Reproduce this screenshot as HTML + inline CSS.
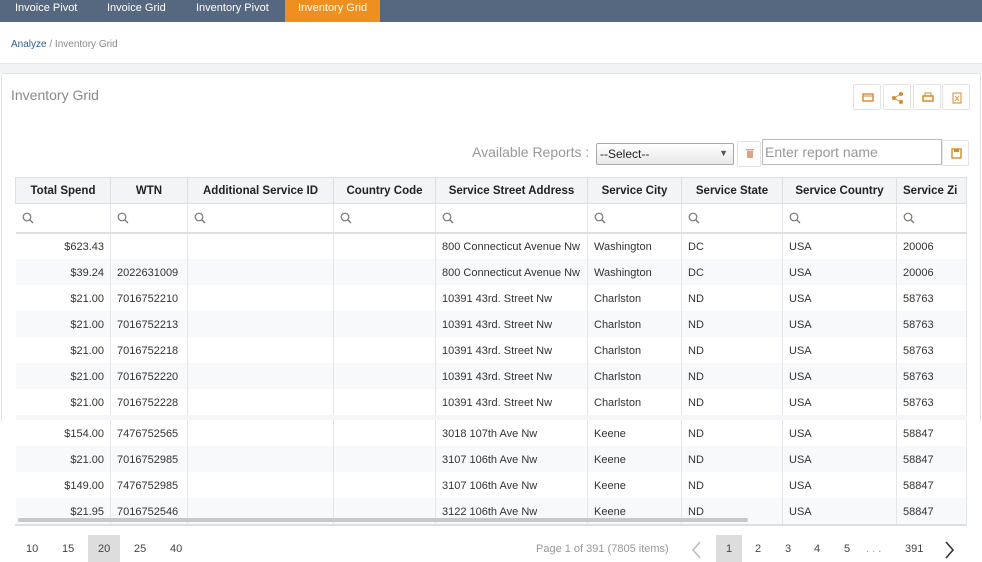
<!DOCTYPE html>
<html><head><meta charset="utf-8"><style>
*{box-sizing:border-box;margin:0;padding:0}
body{width:982px;height:562px;overflow:hidden;background:#fff;font-family:"Liberation Sans",sans-serif;position:relative}
.nav{position:absolute;left:0;top:0;width:982px;height:22px;background:#56687f}
.nav span{position:absolute;top:0;height:22px;line-height:16px;color:#fff;font-size:11px}
.nav .act{background:#ef8f1f;padding:0 13px}
.bc{position:absolute;top:22px;left:0;width:982px;height:42px;background:#fff;border-bottom:1px solid #e4e8ed;font-size:10px;color:#888;padding:17px 11px}
.bc b{font-weight:normal;color:#2f5f8f}
.gap{position:absolute;top:64px;left:0;width:982px;height:10px;background:#f1f3f6}
.panel{position:absolute;top:73px;left:1px;width:980px;height:350px;border:1px solid #dde2e8;border-bottom:none;border-radius:3px}
.title{position:absolute;left:11px;top:87px;font-size:14px;color:#8a8a8a}
.btn{position:absolute;top:84px;width:28px;height:26px;border:1px solid #e3e3e3;border-radius:2px;background:#fff}
.ar{position:absolute;left:472px;top:144px;font-size:14px;color:#999}
.sel{position:absolute;left:596px;top:143px;width:138px;height:22px;border:1px solid #aaa;border-radius:2px;background:linear-gradient(#fff,#e8e8e8);font-size:12px;padding:3px 3px;color:#222}
.inp{position:absolute;left:762px;top:139px;width:180px;height:26px;border:1px solid #bbb;font-size:14px;color:#999;padding:4px 2px}
table{position:absolute;left:15px;top:177px;border-collapse:collapse;table-layout:fixed;font-size:11px}
td,th{border-right:1px solid #e3e6ea;white-space:nowrap;overflow:hidden;padding:0 6px;height:26px}
th{background:#f3f4f6;color:#222;font-size:11.5px;height:26px;border:1px solid #dcdfe3;font-weight:bold}
tr.f td{height:29px;border-bottom:2px solid #dcdfe3;color:#777;padding-top:3px}
tr.r td{color:#333;padding-top:2px}
tr.r:nth-child(even) td{background:#f8f9fb}
td.n{text-align:right}
.pg{position:absolute;top:543px;font-size:11px;color:#444}
</style></head><body>
<div class="nav"><span style="left:15px">Invoice Pivot</span><span style="left:107px">Invoice Grid</span><span style="left:196px">Inventory Pivot</span><span class="act" style="left:285px">Inventory Grid</span></div>
<div class="bc"><b>Analyze</b> / Inventory Grid</div>
<div class="gap"></div>
<div class="panel"></div>
<div class="title">Inventory Grid</div>
<div class="btn" style="left:853px"><svg width="28" height="26"><rect x="9" y="9" width="10" height="7" fill="none" stroke="#d98a2a" stroke-width="1.4"/><line x1="9" y1="11" x2="19" y2="11" stroke="#d98a2a"/></svg></div>
<div class="btn" style="left:883px"><svg width="28" height="26"><circle cx="10" cy="13" r="2" fill="#d98a2a"/><circle cx="17" cy="9" r="2" fill="#d98a2a"/><circle cx="17" cy="17" r="2" fill="#d98a2a"/><path d="M10 13L17 9M10 13L17 17" stroke="#d98a2a"/></svg></div>
<div class="btn" style="left:913px"><svg width="28" height="26"><rect x="9" y="11" width="10" height="5" fill="none" stroke="#d98a2a" stroke-width="1.5"/><rect x="11" y="8" width="6" height="3" fill="none" stroke="#d98a2a"/></svg></div>
<div class="btn" style="left:942px"><svg width="28" height="26"><rect x="10" y="8" width="8" height="10" fill="none" stroke="#d98a2a"/><path d="M12 11l4 5M16 11l-4 5" stroke="#d98a2a" stroke-width=".8"/></svg></div>
<div class="ar">Available Reports :</div>
<div class="sel">--Select--<span style="position:absolute;right:5px;top:4px;font-size:9px;color:#555">▼</span></div>
<div class="btn" style="left:737px;top:141px;width:24px"><svg width="24" height="24"><rect x="9" y="9" width="6" height="7" fill="#e3a080"/><rect x="8" y="7" width="8" height="1.5" fill="#e3a080"/></svg></div>
<div class="inp">Enter report name</div>
<div class="btn" style="left:942px;top:140px;width:27px"><svg width="27" height="24"><rect x="9" y="8" width="9" height="9" fill="none" stroke="#d98a2a" stroke-width="1.4"/><rect x="11" y="8" width="5" height="3" fill="#d98a2a"/></svg></div>
<svg width="0" height="0" style="position:absolute"><defs><g id="mg"><circle cx="5" cy="5" r="3.8" fill="none" stroke="#777" stroke-width="1.2"/><path d="M8 8l3 3" stroke="#777" stroke-width="1.3"/></g></defs></svg>
<table>
<colgroup><col style="width:95px"><col style="width:77px"><col style="width:146px"><col style="width:102px"><col style="width:152px"><col style="width:94px"><col style="width:101px"><col style="width:114px"><col style="width:70px"></colgroup>
<tr><th>Total Spend</th><th>WTN</th><th>Additional Service ID</th><th>Country Code</th><th>Service Street Address</th><th>Service City</th><th>Service State</th><th>Service Country</th><th style="text-align:left">Service Zi</th></tr>
<tr class="f"><td><svg width="12" height="12"><use href="#mg"/></svg></td><td><svg width="12" height="12"><use href="#mg"/></svg></td><td><svg width="12" height="12"><use href="#mg"/></svg></td><td><svg width="12" height="12"><use href="#mg"/></svg></td><td><svg width="12" height="12"><use href="#mg"/></svg></td><td><svg width="12" height="12"><use href="#mg"/></svg></td><td><svg width="12" height="12"><use href="#mg"/></svg></td><td><svg width="12" height="12"><use href="#mg"/></svg></td><td><svg width="12" height="12"><use href="#mg"/></svg></td></tr>
<tr class="r"><td class="n">$623.43</td><td></td><td></td><td></td><td>800 Connecticut Avenue Nw</td><td>Washington</td><td>DC</td><td>USA</td><td>20006</td></tr>
<tr class="r"><td class="n">$39.24</td><td>2022631009</td><td></td><td></td><td>800 Connecticut Avenue Nw</td><td>Washington</td><td>DC</td><td>USA</td><td>20006</td></tr>
<tr class="r"><td class="n">$21.00</td><td>7016752210</td><td></td><td></td><td>10391 43rd. Street Nw</td><td>Charlston</td><td>ND</td><td>USA</td><td>58763</td></tr>
<tr class="r"><td class="n">$21.00</td><td>7016752213</td><td></td><td></td><td>10391 43rd. Street Nw</td><td>Charlston</td><td>ND</td><td>USA</td><td>58763</td></tr>
<tr class="r"><td class="n">$21.00</td><td>7016752218</td><td></td><td></td><td>10391 43rd. Street Nw</td><td>Charlston</td><td>ND</td><td>USA</td><td>58763</td></tr>
<tr class="r"><td class="n">$21.00</td><td>7016752220</td><td></td><td></td><td>10391 43rd. Street Nw</td><td>Charlston</td><td>ND</td><td>USA</td><td>58763</td></tr>
<tr class="r"><td class="n">$21.00</td><td>7016752228</td><td></td><td></td><td>10391 43rd. Street Nw</td><td>Charlston</td><td>ND</td><td>USA</td><td>58763</td></tr>
<tr><td colspan="9" style="height:5px;background:#f4f6f8;border:none"></td></tr>
<tr class="r"><td class="n">$154.00</td><td>7476752565</td><td></td><td></td><td>3018 107th Ave Nw</td><td>Keene</td><td>ND</td><td>USA</td><td>58847</td></tr>
<tr class="r"><td class="n">$21.00</td><td>7016752985</td><td></td><td></td><td>3107 106th Ave Nw</td><td>Keene</td><td>ND</td><td>USA</td><td>58847</td></tr>
<tr class="r"><td class="n">$149.00</td><td>7476752985</td><td></td><td></td><td>3107 106th Ave Nw</td><td>Keene</td><td>ND</td><td>USA</td><td>58847</td></tr>
<tr class="r"><td class="n">$21.95</td><td>7016752546</td><td></td><td></td><td>3122 106th Ave Nw</td><td>Keene</td><td>ND</td><td>USA</td><td>58847</td></tr>
</table>
<div style="position:absolute;left:18px;top:518px;width:730px;height:4px;background:#c8c8c8;border-radius:2px"></div>
<div style="position:absolute;left:15px;top:524px;width:952px;height:2px;background:#dcdfe3"></div>
<div style="position:absolute;left:88px;top:535px;width:32px;height:27px;background:#ddd"></div>
<div class="pg" style="left:26px">10</div><div class="pg" style="left:62px">15</div><div class="pg" style="left:98px">20</div><div class="pg" style="left:134px">25</div><div class="pg" style="left:170px">40</div>
<div class="pg" style="left:536px;color:#999">Page 1 of 391 (7805 items)</div>
<svg style="position:absolute;left:690px;top:541px" width="12" height="18"><path d="M10 1L3 9l7 8" fill="none" stroke="#bbb" stroke-width="1.5"/></svg>
<div style="position:absolute;left:716px;top:535px;width:26px;height:27px;background:#ddd"></div>
<div class="pg" style="left:726px">1</div><div class="pg" style="left:755px">2</div><div class="pg" style="left:785px">3</div><div class="pg" style="left:814px">4</div><div class="pg" style="left:844px">5</div><div class="pg" style="left:866px;color:#999">. . .</div><div class="pg" style="left:905px">391</div>
<svg style="position:absolute;left:944px;top:541px" width="12" height="18"><path d="M2 1l7 8-7 8" fill="none" stroke="#333" stroke-width="1.6"/></svg>
</body></html>
